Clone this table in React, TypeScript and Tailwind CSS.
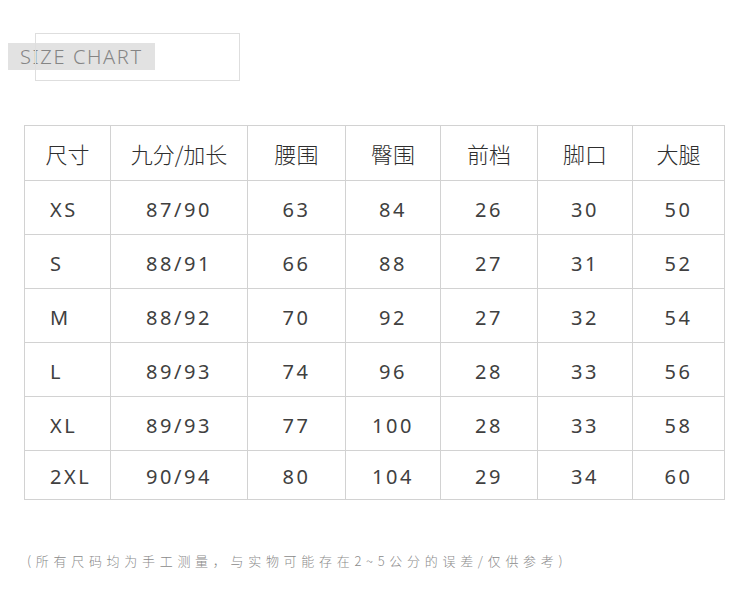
const headers = ["尺寸", "九分/加长", "腰围", "臀围", "前档", "脚口", "大腿"]

const rows = [
  ["XS", "87/90", "63", "84", "26", "30", "50"],
  ["S", "88/91", "66", "88", "27", "31", "52"],
  ["M", "88/92", "70", "92", "27", "32", "54"],
  ["L", "89/93", "74", "96", "28", "33", "56"],
  ["XL", "89/93", "77", "100", "28", "33", "58"],
  ["2XL", "90/94", "80", "104", "29", "34", "60"],
]

const widths = ["w-[86px]", "w-[137px]", "w-[98px]", "w-[95px]", "w-[97px]", "w-[95px]", "w-[92px]"]

const cjk = "font-['Noto_Sans_CJK_SC','Noto_Sans',sans-serif]"

const SizeLabel = () => (
  <div className="relative h-[81px] pt-[43px]">
    <div className="ml-2 flex h-[27px] w-[147px] items-center bg-[#e2e2e2] pl-[12px]">
      <span className="font-['Noto_Sans',sans-serif] text-[20px] font-light leading-none tracking-[1.6px] text-[#858585]">
        SIZE CHART
      </span>
    </div>
    <div className="absolute left-[35px] top-[33px] h-[48px] w-[205px] border border-[#dedede]" />
  </div>
)

export default function App() {
  return (
    <div className={`h-[608px] w-[750px] bg-white ${cjk}`}>
      <SizeLabel />
      <div className="pl-[24px] pt-[44px]">
        <table className="border-collapse">
          <thead>
            <tr className="h-[55px]">
              {headers.map((h, i) => (
                <th
                  key={h}
                  className={`${widths[i]} border border-[#d2d2d2] p-0 text-center text-[22px] font-light text-[#2e2e2e]`}
                >
                  {h}
                </th>
              ))}
            </tr>
          </thead>
          <tbody>
            {rows.map((r, ri) => (
              <tr key={ri} className={ri === rows.length - 1 ? "h-[49px]" : "h-[54px]"}>
                {r.map((c, ci) => (
                  <td
                    key={ci}
                    className={`border border-[#d2d2d2] p-0 pt-[4px] font-['Noto_Sans',sans-serif] text-[20px] font-normal tracking-[2.6px] text-[#404040] ${
                      ci === 0 ? "pl-[25px] text-left" : "text-center"
                    }`}
                  >
                    {c}
                  </td>
                ))}
              </tr>
            ))}
          </tbody>
        </table>
      </div>
      <p className="pl-[27px] pt-[51px] text-[13px] font-light tracking-[4.7px] text-[#8a8a8a]">
        (所有尺码均为手工测量，与实物可能存在2~5公分的误差/仅供参考)
      </p>
    </div>
  )
}
